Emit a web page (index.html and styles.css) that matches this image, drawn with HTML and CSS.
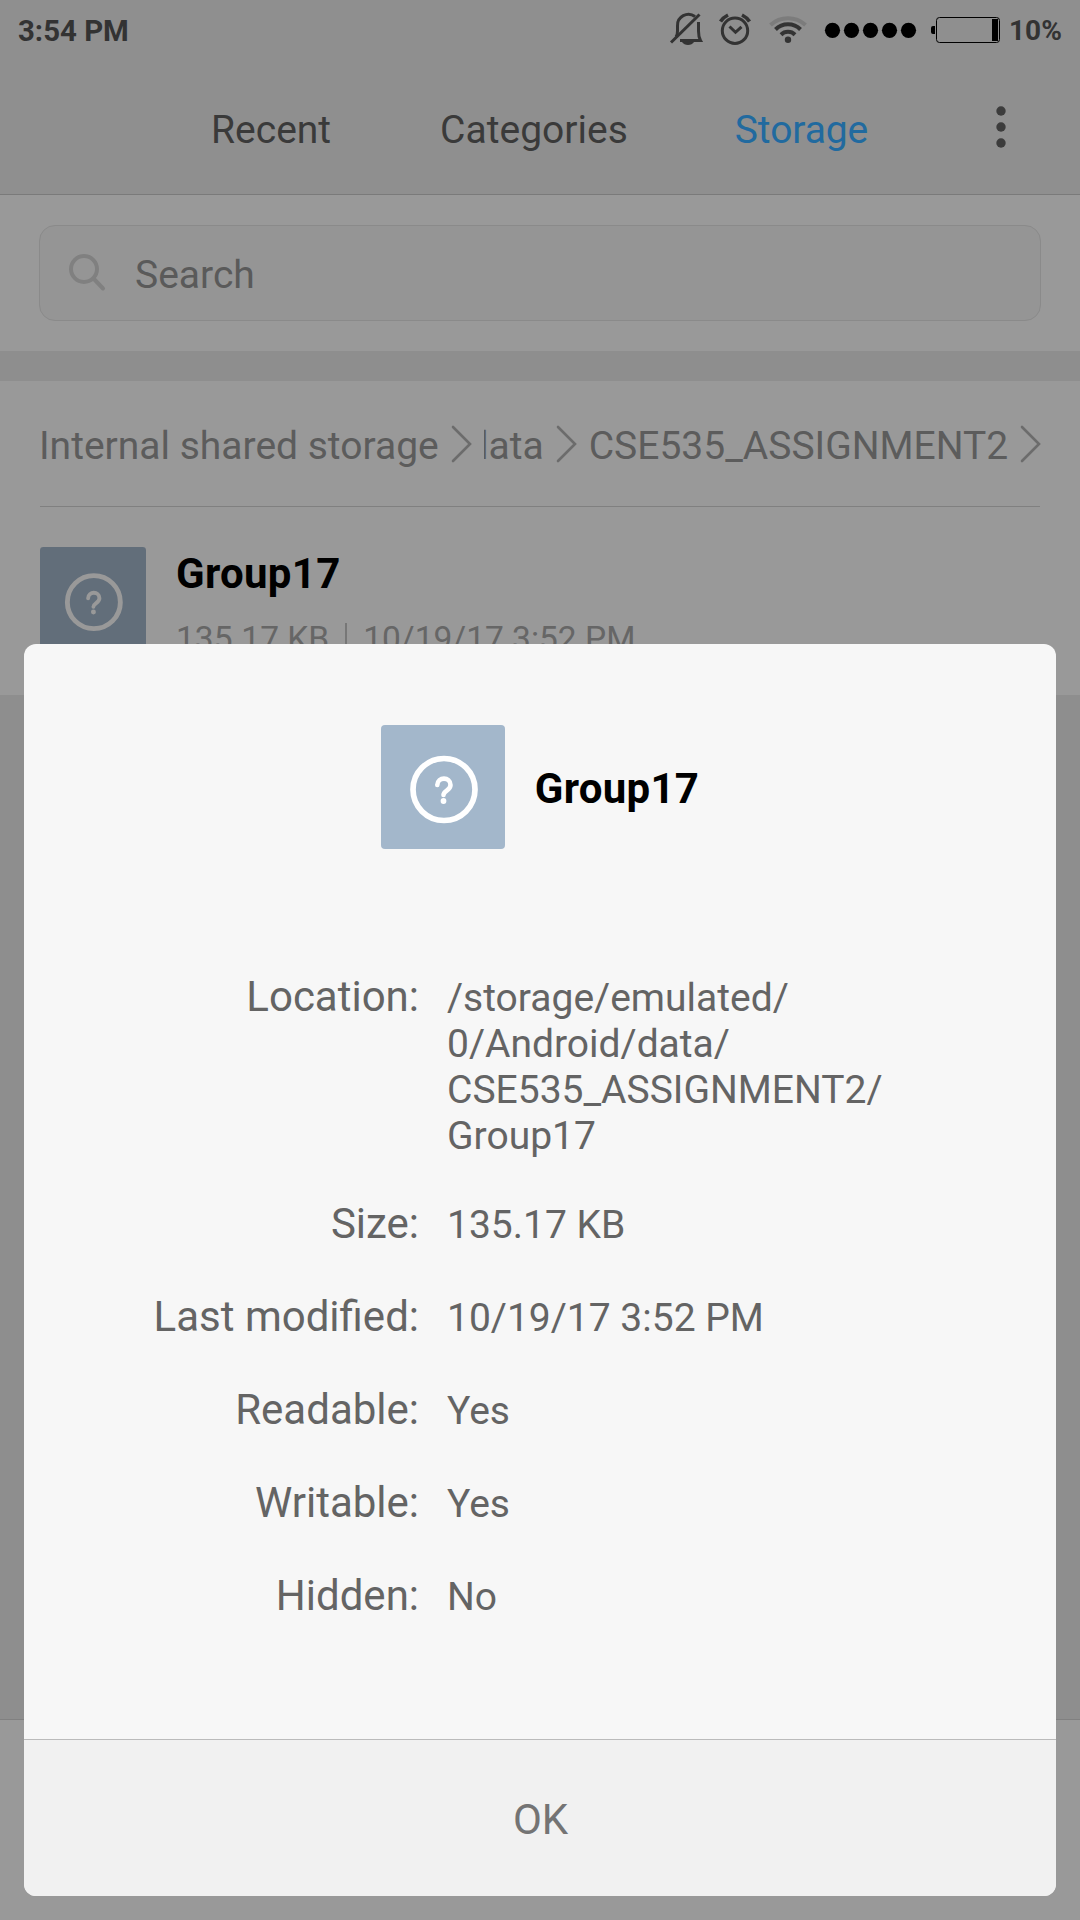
FILE: index.html
```html
<!DOCTYPE html>
<html lang="en">
<head>
<meta charset="utf-8">
<title>File details</title>
<link rel="stylesheet" href="styles.css">
</head>
<body>
<div class="screen">
  <header class="header">
    <div class="status">
      <span class="time">3:54 PM</span>
      <svg class="status-icons" width="332" height="40" viewBox="0 0 332 40">
        <g fill="none" stroke="#333" stroke-width="3">
          <path d="M7 27Q8.500 25 8.500 21V16A11 11 0 0 1 26 6.500M29.500 12V21Q29.500 27 31.500 30.500H11"/>
          <path d="M2 32.500 30.500 4.500"/>
          <path d="M13 32H25Q23 35 19 35T13 32Z" fill="#333" stroke="none"/>
          <circle cx="66" cy="20.700" r="12.700"/>
          <path d="M60.500 16.500l6 5.800 6-5.500"/>
          <path d="M51.500 11.500Q54 7.500 59 5M80.500 11.500Q78 7.500 73 5" stroke-width="3.600"/>
        </g>
        <g fill="none" stroke="#333" stroke-width="4">
          <path d="M101.500 15A26 26 0 0 1 136.500 15" stroke="#7c7c7c"/>
          <path d="M106.500 19.500A17.500 17.500 0 0 1 131.500 19.500"/>
          <path d="M112 24.700A10 10 0 0 1 126 24.700"/>
          <circle cx="119" cy="29.700" r="3.200" fill="#333" stroke="none"/>
        </g>
        <g fill="#000">
          <circle cx="163.500" cy="20.300" r="7.600"/><circle cx="182.500" cy="20.300" r="7.600"/><circle cx="201.500" cy="20.300" r="7.600"/><circle cx="220.500" cy="20.300" r="7.600"/><circle cx="239.500" cy="20.300" r="7.600"/>
          <path d="M266 16h-2q-2 0-2 2v4q0 2 2 2h2zM323 9h6v22h-6z"/>
          <rect x="267.500" y="7.500" width="63" height="25" rx="3" fill="none" stroke="#000"/>
        </g>
      </svg>
      <span class="percent">10%</span>
    </div>
    <nav class="tabs">
      <span class="tab recent">Recent</span>
      <span class="tab categories">Categories</span>
      <span class="tab active">Storage</span>
      <svg class="more" width="10" height="42" viewBox="0 0 10 42"><circle cx="5" cy="5" r="4.700"/><circle cx="5" cy="21" r="4.700"/><circle cx="5" cy="37" r="4.700"/></svg>
    </nav>
  </header>
  <section class="search-area">
    <div class="search">
      <svg width="38" height="40" viewBox="0 0 38 40" fill="none" stroke="#808080" stroke-width="4" stroke-linecap="round"><circle cx="16" cy="16" r="13"/><path d="M26 26 35 35.500"/></svg>
      <span class="placeholder">Search</span>
    </div>
  </section>
  <section class="files">
    <div class="crumbs">
      <span class="crumb">Internal shared storage</span>
      <svg class="chevron" width="22" height="40" viewBox="0 0 22 40"><path d="M2 3 19 20 2 37"/></svg>
      <span class="crumb clipped"><span>data</span></span>
      <svg class="chevron" width="22" height="40" viewBox="0 0 22 40"><path d="M2 3 19 20 2 37"/></svg>
      <span class="crumb">CSE535_ASSIGNMENT2</span>
      <svg class="chevron" width="22" height="40" viewBox="0 0 22 40"><path d="M2 3 19 20 2 37"/></svg>
    </div>
    <div class="file">
      <svg class="tile dim" viewBox="0 0 124 124"><rect width="124" height="124" rx="4"/><circle cx="63" cy="64.500" r="31"/><path d="M56.300 60C56.500 51.500 69.500 51.500 69.500 60C69.500 65.500 62.500 65.500 62.500 70"/><circle class="dot" cx="62.500" cy="76" r="2.900"/></svg>
      <div class="file-text">
        <b class="file-name">Group17</b>
        <div class="meta"><span>135.17 KB</span><i class="bar"></i><span>10/19/17 3:52 PM</span></div>
      </div>
    </div>
  </section>
  <footer class="toolbar"></footer>
  <div class="dialog">
    <div class="dialog-head">
      <svg class="tile" viewBox="0 0 124 124"><rect width="124" height="124" rx="4"/><circle cx="63" cy="64.500" r="31"/><path d="M56.300 60C56.500 51.500 69.500 51.500 69.500 60C69.500 65.500 62.500 65.500 62.500 70"/><circle class="dot" cx="62.500" cy="76" r="2.900"/></svg>
      <b class="dialog-name">Group17</b>
    </div>
    <dl class="details">
      <dt>Location:</dt><dd class="path">/storage/emulated/<br>0/Android/data/<br>CSE535_ASSIGNMENT2/<br>Group17</dd>
      <dt>Size:</dt><dd>135.17 KB</dd>
      <dt>Last modified:</dt><dd>10/19/17 3:52 PM</dd>
      <dt>Readable:</dt><dd>Yes</dd>
      <dt>Writable:</dt><dd>Yes</dd>
      <dt>Hidden:</dt><dd>No</dd>
    </dl>
    <div class="ok">OK</div>
  </div>
</div>
</body>
</html>
```
FILE: styles.css
```css
* { box-sizing: border-box; }
body { margin: 0; font-family: Roboto, sans-serif; }
.screen {
  position: relative;
  width: 1080px;
  height: 1920px;
  overflow: hidden;
  display: flex;
  flex-direction: column;
  background: #8e8e8e;
  font-size: 39px;
}
svg { display: block; flex: none; }
.header { height: 195px; background: #8f8f8f; border-bottom: 1px solid #7a7a7a; color: #3a3a3a; }
.status { height: 60px; display: flex; align-items: center; padding-left: 18px; font-size: 29.4px; font-weight: 700; color: #333; }
.time { width: 651px; padding-top: 2px; }
.percent { margin-left: 8px; font-size: 28px; }
.tabs { height: 134px; display: flex; align-items: center; padding-left: 211px; }
.tab { padding-top: 6px; }
.categories { margin-left: 109px; }
.active { margin-left: 107px; color: #216a9f; letter-spacing: -0.1px; }
.more { margin-left: 128px; fill: #3c3c3c; }
.search-area { height: 156px; padding: 30px 39px; background: #999; }
.search { height: 96px; display: flex; align-items: center; gap: 29px; padding-left: 28px; border: 1px solid #8a8a8a; border-radius: 16px; background: #959595; color: #5a5a5a; }
.placeholder { padding-top: 4px; }
.files { height: 314px; margin-top: 30px; padding: 0 40px; background: #999; }
.crumbs { height: 126px; display: flex; align-items: center; border-bottom: 1px solid #808080; color: #5c5c5c; white-space: nowrap; }
.crumb { flex: none; padding-top: 4px; }
.crumb:first-child { margin-left: -1px; }
.chevron { fill: none; stroke: #6c6c6c; stroke-width: 2.6; stroke-linecap: round; }
.crumb + .chevron { margin-left: 12px; }
.chevron + .crumb { margin-left: 11px; }
.clipped { width: 60px; overflow: hidden; display: flex; justify-content: flex-end; }
.file { display: flex; padding-top: 40px; gap: 30px; }
.tile { width: 124px; height: 124px; fill: none; stroke: #fff; stroke-width: 5.7; stroke-linecap: round; }
.tile rect { fill: #a3b7cb; stroke: none; }
.tile .dot { fill: #fff; stroke: none; }
.tile path { stroke-width: 4.6; }
.dim { width: 106px; height: 106px; stroke: #999; }
.dim rect { fill: #626e7a; }
.dim .dot { fill: #999; }
.file-name { display: block; padding-top: 2px; font-size: 42px; line-height: 50px; letter-spacing: 0.3px; color: #000; }
.meta { display: flex; align-items: center; font-size: 33.5px; line-height: 40px; margin-top: 20px; color: #666; }
.bar { width: 2px; height: 32px; margin: 0 16px; background: #777; }
.toolbar { height: 201px; margin-top: auto; background: #999; border-top: 1px solid #808080; }
.dialog {
  position: absolute;
  left: 24px;
  top: 644px;
  width: 1032px;
  height: 1252px;
  display: flex;
  flex-direction: column;
  overflow: hidden;
  border-radius: 12px;
  background: #f7f7f7;
  color: #646464;
}
.dialog-head { display: flex; justify-content: center; align-items: center; gap: 30px; padding-top: 81px; font-size: 42px; color: #000; }
.dialog-name { padding-top: 3px; letter-spacing: 0.3px; }
.details { flex: 1; margin: 123px 0 0; display: grid; grid-template-columns: 395px 1fr; column-gap: 28px; row-gap: 43px; align-content: start; }
dt { text-align: right; font-size: 42px; line-height: 50px; }
dd { margin: 0; padding-top: 3px; line-height: 46px; }
.path { margin-bottom: -3px; }
.ok { height: 157px; padding: 2px 0 0 1px; border-top: 1px solid #bbb; background: #f1f1f1; display: flex; align-items: center; justify-content: center; font-size: 42px; color: #747474; }
```
